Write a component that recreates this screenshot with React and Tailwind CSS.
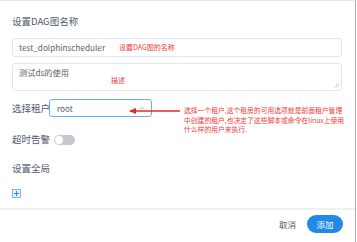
const CJK = { fontFamily: '"Noto Sans CJK SC", "Liberation Sans", sans-serif' }

function Chevron() {
  return (
    <svg width="6" height="4" viewBox="0 0 6 4" className="ml-auto mr-[6px]">
      <path d="M0.5 0.5 L3 3 L5.5 0.5" fill="none" stroke="#c0c4cc" strokeWidth="0.9" />
    </svg>
  )
}

export default function App() {
  return (
    <div
      className="w-[356px] h-[242px] bg-white border-t border-t-[#e6e6e6] border-r border-r-[#a9a9a9] flex flex-col text-[#515a6e] overflow-hidden"
      style={CJK}
    >
      <div className="flex flex-col pl-[12px] pr-[13px] pt-[14px]">
        {/* DAG名称 */}
        <p className="text-[9.5px] leading-[13px]">设置DAG图名称</p>
        <div className="relative mt-[10px] h-[19px] border border-[#e1e6ee] rounded-[3px] flex items-center pl-[6px]">
          <span className="text-[8.2px] text-[#606266]">test_dolphinscheduler</span>
          <span className="absolute left-[106px] top-[3px] text-[7px] leading-[10px] text-[#ee3b3b]">设置DAG图的名称</span>
        </div>

        {/* 描述 */}
        <div className="relative mt-[6px] h-[28px] border border-[#e1e6ee] rounded-[3px] pl-[6px] pt-[3px]">
          <p className="text-[8.2px] leading-[11px] text-[#606266]">测试ds的使用</p>
          <span className="absolute left-[98px] top-[11px] text-[7px] leading-[10px] text-[#ee3b3b]">描述</span>
          <svg width="5" height="5" viewBox="0 0 5 5" className="absolute right-[2px] bottom-[2px]">
            <path d="M0.5 4.5 L4.5 0.5 M2.5 4.5 L4.5 2.5" stroke="#b5b5b5" strokeWidth="0.7" />
          </svg>
        </div>

        {/* 租户 */}
        <div className="relative mt-[8px] flex items-center h-[18px]">
          <span className="text-[9.5px] leading-[13px] w-[37px] whitespace-nowrap">选择租户</span>
          <div className="w-[103px] h-[18px] border border-[#68acf2] rounded-[3px] flex items-center pl-[7px]">
            <span className="text-[8.2px] text-[#515a6e]">root</span>
            <Chevron />
          </div>
          <svg width="52" height="6" viewBox="0 0 52 6" className="absolute left-[117px] top-[9px]">
            <path d="M1 3 L51 3" stroke="#e8262b" strokeWidth="1.6" />
            <path d="M0 3 L7 0 L7 6 Z" fill="#e8262b" />
          </svg>
          <div className="absolute left-[172px] top-[7px] w-[165px] text-[6.8px] leading-[9.7px] text-[#ee3b3b] whitespace-nowrap">
            <p>选择一个租户,这个租房的可用选项就是前面租户管理</p>
            <p>中创建的租户,也决定了这些脚本或命令在linux上使用</p>
            <p>什么样的用户来执行.</p>
          </div>
        </div>

        {/* 超时告警 */}
        <div className="mt-[16px] flex items-center gap-[4px] h-[13px]">
          <span className="text-[9.5px] leading-[13px] whitespace-nowrap">超时告警</span>
          <span className="w-[21px] h-[10px] rounded-full bg-[#c5c8ce] flex items-center pl-[1px]">
            <span className="w-[8px] h-[8px] rounded-full bg-white" />
          </span>
        </div>

        {/* 设置全局 */}
        <p className="mt-[16px] text-[9.5px] leading-[13px]">设置全局</p>
        <svg width="9" height="9" viewBox="0 0 9 9" className="mt-[14px]">
          <rect x="0.5" y="0.5" width="8" height="8" fill="#e6f1fc" stroke="#7bb8f0" />
          <path d="M4.5 2 V7 M2 4.5 H7" stroke="#2d8cf0" strokeWidth="1" />
        </svg>
      </div>

      {/* Footer */}
      <div className="mt-[10px] border-t-2 border-t-[#f0f0f0] flex items-center justify-end gap-[11px] pr-[12px] pt-[5px]">
        <span className="text-[8.5px] text-[#515a6e]">取消</span>
        <button className="w-[36px] h-[18px] rounded-full bg-[#2289e8] text-white text-[8.5px] leading-none">添加</button>
      </div>
    </div>
  )
}
